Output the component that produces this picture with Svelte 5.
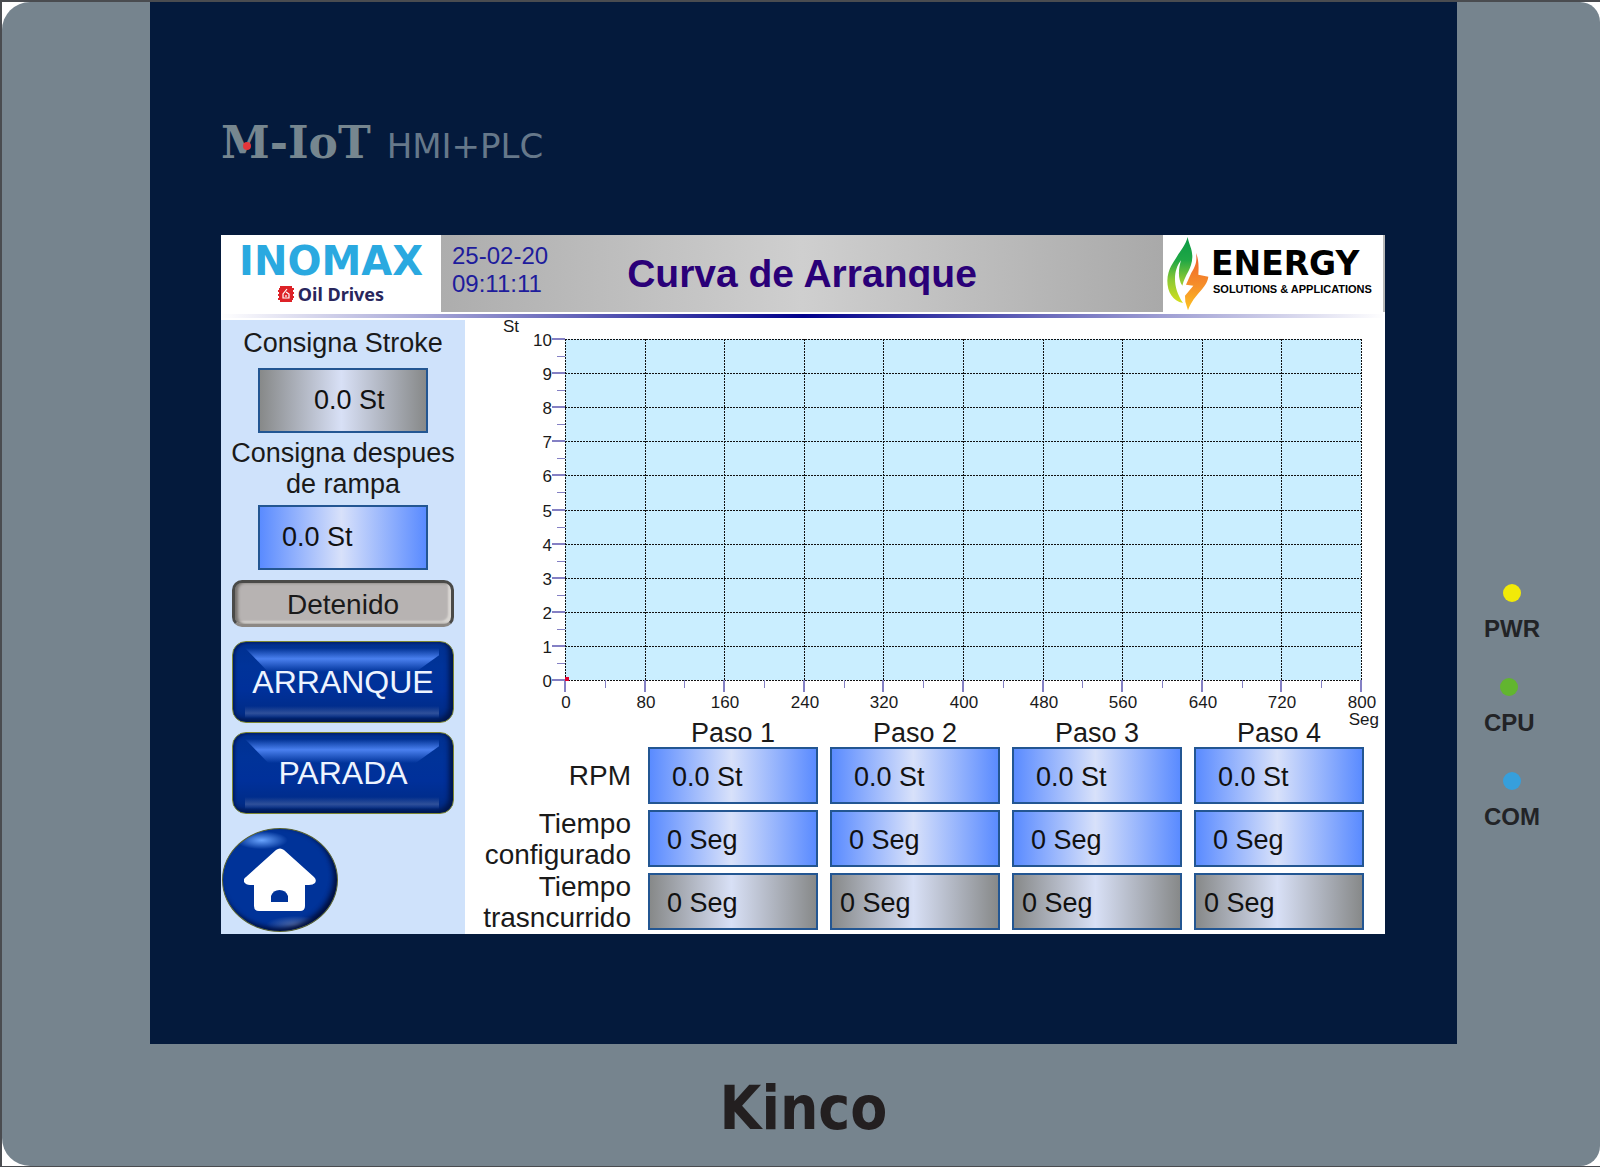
<script>
	/* readings shown on the panel */
	let stroke = $state('0.0 St');
	let afterRamp = $state('0.0 St');

	const steps = ['Paso 1', 'Paso 2', 'Paso 3', 'Paso 4'];

	let rows = $state([
		{ label: ['RPM'], kind: 'blue', indents: ['l', 'l', 'l', 'l'], values: ['0.0 St', '0.0 St', '0.0 St', '0.0 St'] },
		{ label: ['Tiempo', 'configurado'], kind: 'blue', indents: ['m', 'm', 'm', 'm'], values: ['0 Seg', '0 Seg', '0 Seg', '0 Seg'] },
		{ label: ['Tiempo', 'trasncurrido'], kind: 'grey', indents: ['m', 's', 's', 's'], values: ['0 Seg', '0 Seg', '0 Seg', '0 Seg'] }
	]);

	const leds = [
		{ name: 'PWR', color: 'yellow' },
		{ name: 'CPU', color: 'green' },
		{ name: 'COM', color: 'cyan' }
	];

	/* chart geometry */
	const plot = { x: 100, y: 19, w: 796, h: 341 };
	const px = (v) => Math.round(plot.x + (v / 800) * plot.w);
	const py = (v) => Math.round(plot.y + plot.h - (v / 10) * plot.h);
	const range = [0, 1, 2, 3, 4, 5, 6, 7, 8, 9, 10];
	const halves = range.slice(0, 10);
</script>

<div class="frame">
<div class="device">
	<div class="bezel">
		<div class="brand">
			<span class="miot">M-IoT<i></i></span>
			<span class="hmi">HMI+PLC</span>
		</div>

		<main class="screen">
			<header>
				<div class="inomax">
					<strong>INOMAX</strong>
					<span>
						<svg width="16" height="16" viewBox="0 0 16 16" aria-hidden="true">
							<path d="M2 0h12v2h2v2h-1v2h1v2h-1v2h1v2h-1v2h-1v2H2v-2H0v-2h1v-2H0V8h1V6H0V4h1V2h1z" fill="#dd2227" />
							<path d="M9 3L5 8v4h6V8L8 6M8 9v2" fill="none" stroke="#fff" stroke-width="1.2" />
						</svg>
						Oil Drives
					</span>
				</div>
				<div class="bar">
					<time>25-02-20<br />09:11:11</time>
					<h1>Curva de Arranque</h1>
				</div>
				<div class="energy">
					<svg width="44" height="75" viewBox="190 35 132 225" aria-hidden="true">
						<defs>
							<linearGradient id="leaf" x1="0" y1="0" x2="0" y2="1">
								<stop offset="0" stop-color="#0a9a45" />
								<stop offset="0.35" stop-color="#1fa745" />
								<stop offset="0.65" stop-color="#8cc934" />
								<stop offset="1" stop-color="#d6df1e" />
							</linearGradient>
							<linearGradient id="bolt" x1="0" y1="0" x2="0" y2="1">
								<stop offset="0" stop-color="#ef5f2b" />
								<stop offset="0.6" stop-color="#f6922a" />
								<stop offset="1" stop-color="#fdc420" />
							</linearGradient>
						</defs>
						<path d="M258 38C262 62 272 72 272 98C271 135 250 150 242 184C228 164 230 135 238 108C214 138 212 190 244 236C213 229 197 203 197 169C198 133 216 114 225 98C234 82 252 63 258 38z" fill="url(#leaf)" />
						<path d="M283 86C290 104 292 119 290 151L320 157C315 194 278 206 259 258L251 232L250 214L275 184L253 181L269 145C284 122 286 107 283 86z" fill="url(#bolt)" />
					</svg>
					<p><strong>ENERGY</strong><span>SOLUTIONS &amp; APPLICATIONS</span></p>
				</div>
			</header>
			<div class="rule"></div>

			<div class="content">
				<aside>
					<label for="stroke">Consigna Stroke</label>
					<input id="stroke" class="field grey indent-xl" bind:value={stroke} readonly />
					<label for="ramp">Consigna despues<br />de rampa</label>
					<input id="ramp" class="field blue indent-l" bind:value={afterRamp} />
					<output>Detenido</output>
					<button class="push">ARRANQUE</button>
					<button class="push">PARADA</button>
					<button class="home" aria-label="Inicio">
						<svg width="72" height="64" viewBox="0 0 72 64" aria-hidden="true">
							<path d="M32 2Q36-1 40 2L70 29Q73 32 71 35Q69 37 65 37H61V58Q61 63 56 63H15Q10 63 10 58V37H6Q2 37 0 34Q-1 31 2 29z" fill="#fff" />
							<path d="M27 54V48a9 9 0 0 1 17 0v6z" fill="#003399" />
						</svg>
					</button>
				</aside>

				<section>
					<!-- start-up curve -->
					<svg class="chart" viewBox="0 0 920 402" role="img" aria-label="Curva de Arranque">
						<rect x={plot.x} y={plot.y} width={plot.w} height={plot.h} fill="#caeeff" />
						{#each range as i}
							<g class="grid">
								<line x1={plot.x} x2={plot.x + plot.w} y1={py(i)} y2={py(i)} />
								<line y1={plot.y} y2={plot.y + plot.h} x1={px(i * 80)} x2={px(i * 80)} />
							</g>
							<g class="tick">
								<line x1={plot.x - 13} x2={plot.x} y1={py(i)} y2={py(i)} />
								<line y1={plot.y + plot.h} y2={plot.y + plot.h + 12} x1={px(i * 80)} x2={px(i * 80)} />
							</g>
							<text x={plot.x - 13} y={py(i) + 7} text-anchor="end">{i}</text>
							<text x={px(i * 80) + 1} y="388" text-anchor="middle">{i * 80}</text>
						{/each}
						{#each halves as i}
							<g class="tick minor">
								<line x1={plot.x - 8} x2={plot.x} y1={py(i + 0.5)} y2={py(i + 0.5)} />
								<line y1={plot.y + plot.h} y2={plot.y + plot.h + 8} x1={px(i * 80 + 40)} x2={px(i * 80 + 40)} />
							</g>
						{/each}
						<rect x="100" y="357" width="4" height="4" fill="#e00030" />
						<text x="38" y="12">St</text>
						<text x="914" y="405" text-anchor="end">Seg</text>
					</svg>

					<div class="steps">
						<table>
							<thead>
								<tr>
									<td class="corner"></td>
									{#each steps as step}
										<th scope="col">{step}</th>
									{/each}
								</tr>
							</thead>
							<tbody>
								{#each rows as row}
									<tr>
										<th scope="row">
											{#each row.label as line}<div>{line}</div>{/each}
										</th>
										{#each steps as step, i}
											<td>
												<input
													class="field {row.kind} indent-{row.indents[i]}"
													aria-label="{row.label.join(' ')} {step}"
													readonly={row.kind === 'grey'}
													bind:value={row.values[i]}
												/>
											</td>
										{/each}
									</tr>
								{/each}
							</tbody>
						</table>
					</div>
				</section>
			</div>
		</main>
	</div>

	<ul class="leds">
		{#each leds as led}
			<li><i class={led.color}></i>{led.name}</li>
		{/each}
	</ul>

	<footer>Kinco</footer>
</div>
</div>

<style>
	:global(body) { margin: 0; background: #fff; }

	.frame {
		border: 2px solid #4a4c50;
		border-right: 0;
	}

	.device {
		display: grid;
		grid-template-columns: 148px minmax(0, 1fr) 143px;
		background: #76848e;
		border-radius: 28px 20px 20px 28px;
		font-family: "Liberation Sans", Arial, sans-serif;
		color: #1a1a1a;
	}

	.bezel {
		grid-column: 2;
		background: #041a3c;
		padding: 0 72px 110px 71px;
	}

	.brand {
		display: flex;
		align-items: baseline;
		gap: 16px;
		height: 124px;
		padding-top: 109px;
		color: #76868f;
	}

	.miot {
		position: relative;
		font: bold 44px/64px "DejaVu Serif", serif;
	}

	/* red dot in the middle of the M */
	.miot i {
		position: absolute;
		left: 22px;
		top: 31px;
		width: 8px;
		height: 8px;
		border-radius: 50%;
		background: #e5353a;
	}

	.hmi { font: 34px/64px "DejaVu Sans", sans-serif; color: #66788a; }

	.screen { background: #fff; }

	header { display: flex; height: 77px; }

	.inomax {
		width: 220px;
		display: flex;
		flex-direction: column;
		align-items: center;
		padding-top: 7px;
		box-sizing: border-box;
		font-family: "DejaVu Sans", sans-serif;
	}

	.inomax strong { font-size: 40px; line-height: 39px; color: #2aa9e0; }

	.inomax span {
		display: flex;
		align-items: center;
		gap: 4px;
		font: bold 18px/26px "Noto Sans", sans-serif;
		color: #28265c;
	}

	.bar {
		flex: 1;
		display: grid;
		grid-template-columns: 1fr auto 1fr;
		background: linear-gradient(90deg, #adadad, #cfcfcf 50%, #a9a9a9);
	}

	time {
		padding: 7px 0 0 11px;
		font-size: 24px;
		line-height: 28px;
		color: #1e1c9c;
	}

	h1 {
		margin: 0;
		font-size: 39px;
		line-height: 78px;
		color: #2a0078;
		white-space: nowrap;
	}

	.energy {
		display: flex;
		width: 222px;
		box-sizing: border-box;
		padding: 1px 0 0 2px;
		border-right: 2px solid #b8b8b8;
		gap: 2px;
		color: #000;
	}

	.energy p { margin: 8px 0 0; display: flex; flex-direction: column; }
	.energy strong { font: bold 33px/39px "DejaVu Sans", sans-serif; }
	.energy span { font-size: 11px; font-weight: bold; line-height: 13px; white-space: nowrap; padding-left: 2px; }

	.rule {
		height: 4px;
		margin: 2px 0;
		background: linear-gradient(90deg, #fff, #00008b 50%, #fff);
	}

	.content {
		display: grid;
		grid-template-columns: 244px minmax(0, 1fr);
		font-size: 27px;
	}

	aside {
		display: flex;
		flex-direction: column;
		align-items: center;
		padding: 8px 11px 2px;
		background: #cfe2fb;
		line-height: 31px;
		text-align: center;
		white-space: nowrap;
	}

	aside .field { width: 170px; height: 65px; margin: 5px 0; }
	aside label:first-child { padding-bottom: 4px; }

	.field {
		display: block;
		box-sizing: border-box;
		width: 100%;
		height: 57px;
		padding: 0;
		border: 2px solid #235692;
		font: inherit;
		color: #111;
	}

	.blue { background: linear-gradient(90deg, #5a8bff, #d8e1fa 49%, #5a8bff); }
	.grey { background: linear-gradient(90deg, #878989, #d8e0f6 49%, #878989); }

	.indent-s { padding-left: 8px; }
	.indent-m { padding-left: 17px; }
	.indent-l { padding-left: 22px; }
	.indent-xl { padding-left: 54px; }

	output {
		align-self: stretch;
		box-sizing: border-box;
		height: 47px;
		margin-top: 5px;
		border: 3px solid #4a4a48;
		border-bottom-color: #8c8884;
		border-radius: 10px;
		background: #b7b3b2;
		box-shadow: inset 3px 0 3px #77736f, inset -3px -3px 2px #d9d6d2;
		font-size: 28px;
		line-height: 44px;
	}

	.push {
		position: relative;
		z-index: 0;
		align-self: stretch;
		height: 82px;
		margin-top: 14px;
		padding: 0;
		border: 1px solid #7d8530;
		border-radius: 14px;
		background: linear-gradient(#003090, #003399 30%, #00309a 60%, #002a80);
		box-shadow: inset -4px -3px 5px #00164c, inset 2px 1px 3px #001c66;
		font: 32px/80px "Liberation Sans", Arial, sans-serif;
		color: #eef4ff;
	}

	.push + .push { margin-top: 9px; }

	/* bevelled light along the top and bottom edges */
	.push::before, .push::after {
		content: '';
		position: absolute;
		z-index: -1;
		left: 12px;
		right: 14px;
	}

	.push::before {
		top: 6px;
		height: 24px;
		background: linear-gradient(#4a80ef00, #4a80ef 45%, #4a80ef00);
		clip-path: polygon(0 0, 100% 0, 100% 30%, 88% 100%, 12% 100%);
	}

	.push::after {
		bottom: 4px;
		height: 12px;
		background: linear-gradient(#34569f00, #2f509a 60%, #34569f00);
	}

	.home {
		align-self: flex-start;
		display: grid;
		place-items: center;
		width: 116px;
		height: 104px;
		margin: 14px 0 0 -10px;
		padding: 0;
		border: 1px solid #5a6230;
		border-radius: 50%;
		background:
			radial-gradient(ellipse 26px 9px at 34% 11%, #6aa5ff, transparent),
			radial-gradient(ellipse 30px 9px at 64% 94%, #5873b0, transparent),
			radial-gradient(ellipse at 45% 45%, #003399 60%, #001c66);
		box-shadow: inset -3px -3px 5px #000e3c;
	}

	.chart { display: block; width: 100%; overflow: visible; }
	.chart text { font-size: 17px; fill: #1a1a1a; }
	.grid line { stroke: #111; stroke-width: 1; stroke-dasharray: 2 1; shape-rendering: crispEdges; }
	.tick line { stroke: #8480c4; stroke-width: 2; }
	.tick.minor line { stroke-width: 1; shape-rendering: crispEdges; }

	.steps { padding-right: 9px; }

	table {
		width: 100%;
		table-layout: fixed;
		border-spacing: 12px 0;
	}

	th, td { padding: 0; font-weight: normal; }
	thead th { height: 22px; line-height: 22px; }
	.corner { width: 159px; }
	tbody th { height: 63px; font-size: 28px; line-height: 31px; text-align: right; padding-right: 5px; }
	tbody .field { padding-top: 4px; }

	.leds {
		margin: 0;
		padding: 582px 0 0 27px;
		list-style: none;
		display: flex;
		flex-direction: column;
		align-items: flex-start;
		gap: 37px;
		font-size: 24px;
		font-weight: bold;
		line-height: 24px;
		color: #222326;
	}

	.leds li { display: flex; flex-direction: column; align-items: center; gap: 15px; }
	.leds i { width: 18px; height: 18px; border-radius: 50%; }
	.yellow { background: #f2ea08; }
	.green { background: #62b52f; }
	.cyan { background: #369fdc; }

	footer {
		grid-column: 2;
		height: 122px;
		font: bold 60px/128px "DejaVu Sans Condensed", "DejaVu Sans", sans-serif;
		text-align: center;
		color: #231f20;
	}
</style>
